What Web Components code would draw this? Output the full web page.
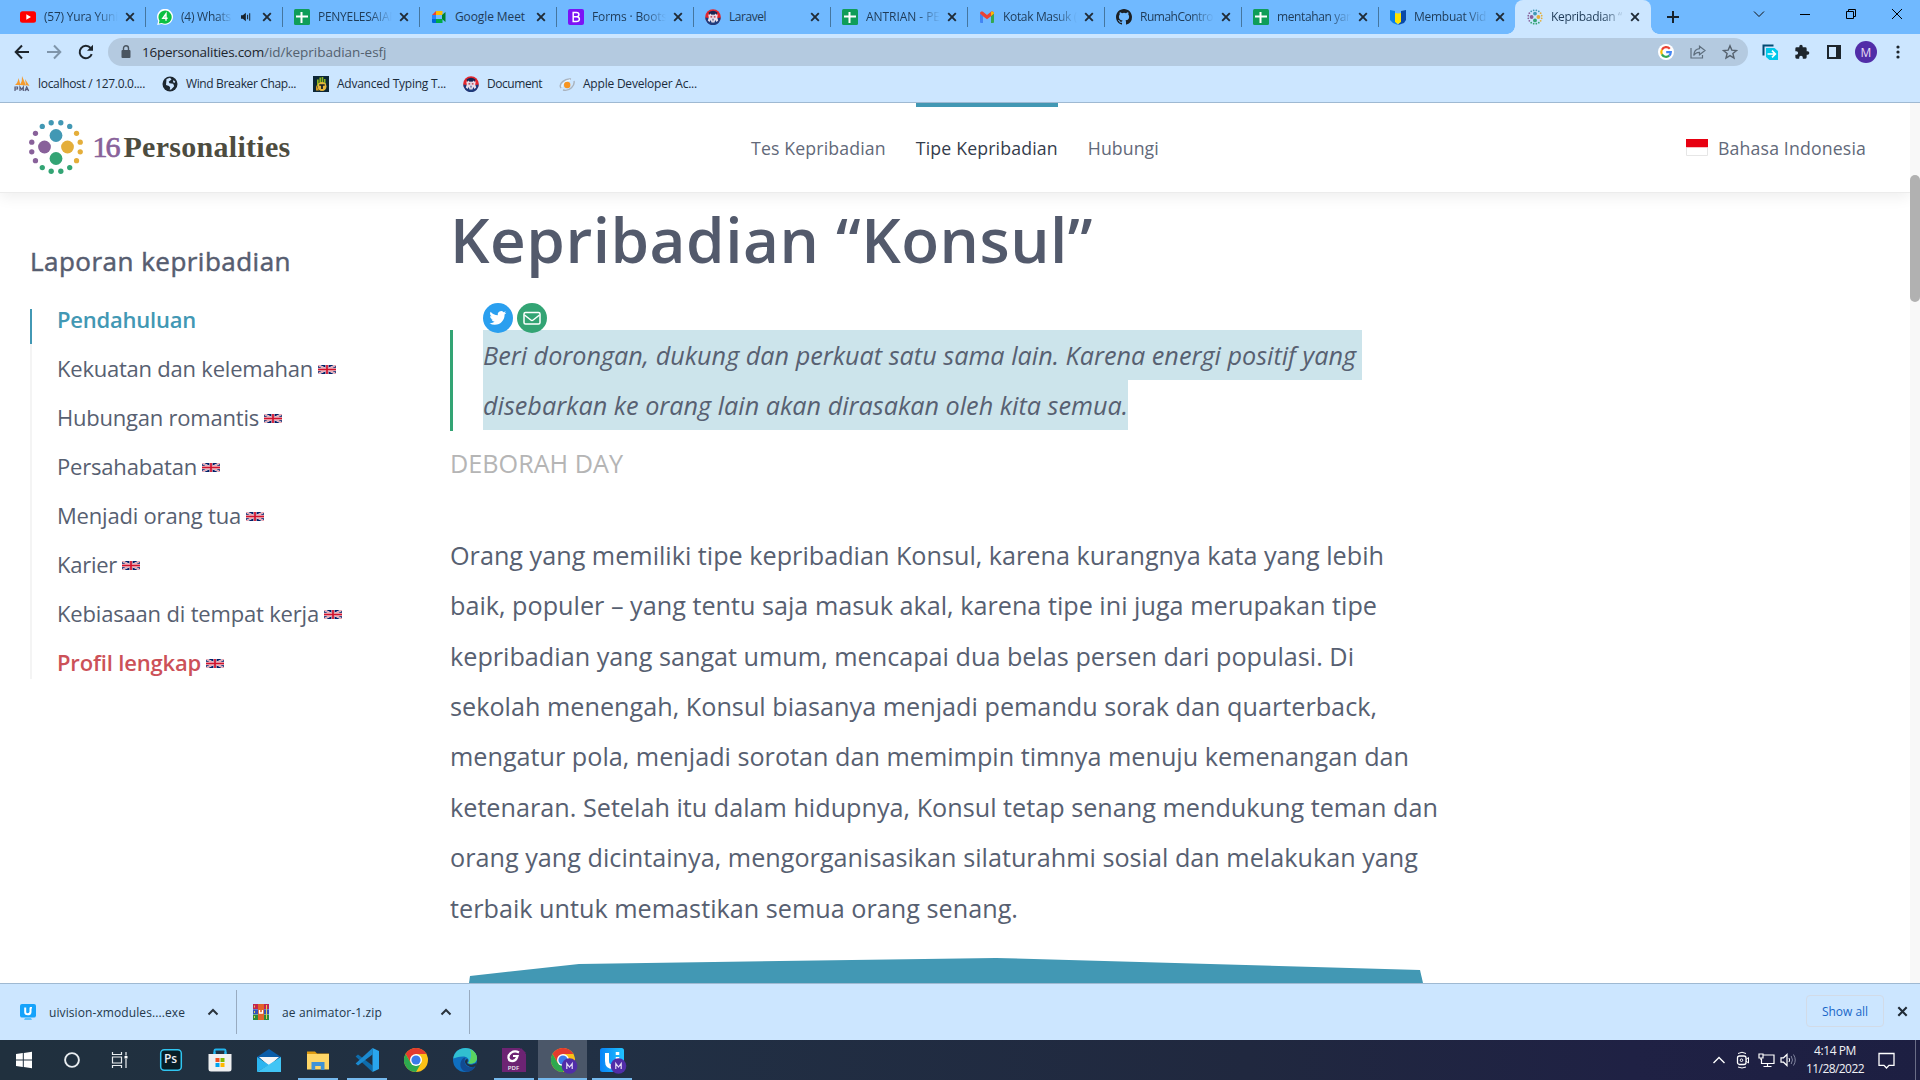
<!DOCTYPE html>
<html lang="id">
<head>
<meta charset="utf-8">
<title>Kepribadian “Konsul”</title>
<style>
html,body{margin:0;height:100%}
body{width:1920px;height:1080px;overflow:hidden;display:flex;flex-direction:column;font:12px "Open Sans","Noto Sans",sans-serif;background:#fff}
</style>
</head>
<body>
<tab-strip></tab-strip>
<tool-bar></tool-bar>
<bookmark-bar></bookmark-bar>
<site-page></site-page>
<download-bar></download-bar>
<task-bar></task-bar>
<script>
const sheet = '<rect width="16" height="16" rx="1.5" fill="#0f9d58"/><path d="M6.500 3h2v3.500H14v2H8.500V14h-2V8.500H2v-2h4.500z" fill="#fff"/>';
const face = '<circle cx="8" cy="8" r="7.800" fill="#e3262e"/><path d="M.3 8.500a7.700 7.700 0 0 0 15.400 0L12.500 9 8 12 3.500 9z" fill="#1d3b7c"/><path d="M3.500 3.500Q8 0 12.500 3.500L11.500 6H4.500z" fill="#182653"/><path d="M3.200 5.500q1.800.5 2.600-1L7 6.500l1-1.500 1 1.500 1.200-2q.8 1.500 2.600 1l-.6 3 1 3-1.700 1.500-1.300-2-.7 2.500h-3L5.800 11l-1.300 2-1.700-1.500 1-3z" fill="#e9dfea"/><path d="M5.500 7.200h1.700v1.200H5.500zm3.300 0h1.700v1.200H8.800z" fill="#b52a3a"/><path d="M7.300 9.800h1.400L8 13z" fill="#3a4a80"/>';
const chrome = '<circle cx="12" cy="12" r="12" fill="#fbc116"/><path d="M12 12L6.800 15 1.600 6A12 12 0 0 1 22.400 6H12z" fill="#e33b2e"/><path d="M1.600 6A12 12 0 0 0 12 24L17.200 15 12 17.500 6.800 15z" fill="#2da94f"/><circle cx="12" cy="12" r="6" fill="#fff"/><circle cx="12" cy="12" r="4.600" fill="#3a7bea"/>';
const badge = '<circle cx="18.500" cy="18" r="7.800" fill="#512da8"/><path d="M15.800 21v-5.500L18.500 19l2.700-3.500V21" fill="none" stroke="#e5dcf5" stroke-width="1.200"/>';
function dots(r, s) {
  const c = ['#4298b4','#e4ae3a','#33a474','#88619a'];
  let out = '';
  for (let i = 0; i < 16; i++) {
    const a = (i * 22.5 - 33.75) * Math.PI / 180;
    out += `<circle cx="${(27 + r * Math.sin(a)).toFixed(2)}" cy="${(27 - r * Math.cos(a)).toFixed(2)}" r="${s}" fill="${c[Math.floor(i / 4)]}"/>`;
  }
  return out + '<circle cx="27" cy="15.500" r="6.400" fill="#4298b4"/><circle cx="38.500" cy="27" r="6.400" fill="#e4ae3a"/><circle cx="27" cy="38.500" r="6.400" fill="#33a474"/><circle cx="15.500" cy="27" r="6.400" fill="#88619a"/>';
}
const ICONS = {
  youtube: ['0 0 16 16','<rect y="2.300" width="16" height="11.400" rx="2.500" fill="#f00"/><path d="M6.300 5.300v5.400L11 8z" fill="#fff"/>'],
  whats: ['0 0 16 16','<path d="M.2 16l1-4A8 8 0 1 1 4.500 15z" fill="#fff"/><path d="M1.800 14.400l.7-2.700a6.600 6.600 0 1 1 2.300 2.200z" fill="#0cc042"/><path d="M9 11.800V4.800L5.800 9.300h4.800" fill="none" stroke="#fff" stroke-width="1.400"/>'],
  sheet: ['0 0 16 16', sheet],
  meet: ['0 0 16 16','<path d="M1 6l4-4v4z" fill="#ea4335"/><path d="M5 2h6.500v4H5z" fill="#fbbc04"/><path d="M1 6h4v4H1z" fill="#2684fc"/><path d="M1 10h4v4H2a1 1 0 0 1-1-1z" fill="#0066da"/><path d="M5 10h6.500v4H5z" fill="#00ac47"/><path d="M11 6l3.500-3v10L11 10z" fill="#00832d"/><path d="M5 6h5v4H5z" fill="#70baff"/>'],
  boots: ['0 0 16 16','<rect width="16" height="16" rx="2" fill="#7c12f5"/><path d="M5.200 3.500h3.300c3.200 0 3.200 4.200.3 4.300 3.700.2 3.300 4.700-.3 4.700H5.200zM5.500 7.800h3.500" fill="none" stroke="#fff" stroke-width="1.500"/>'],
  face: ['0 0 16 16', face],
  gmail: ['0 0 16 16','<path d="M1 4.500l3 2.200V14H2a1 1 0 0 1-1-1z" fill="#4285f4"/><path d="M12 6.700l3-2.200V13a1 1 0 0 1-1 1h-2z" fill="#34a853"/><path d="M1 4.500C1 2.500 3 2 4.300 3L8 6l3.700-3C13 2 15 2.500 15 4.500l-3 2.800-4 3-4-3z" fill="#ea4335"/><path d="M12 3c1.500-1 3 0 3 1.500L12 7z" fill="#fbbc04"/>'],
  github: ['0 0 16 16','<path d="M8 0C3.580 0 0 3.580 0 8c0 3.540 2.290 6.530 5.470 7.590.4.070.55-.17.55-.38 0-.19-.01-.82-.01-1.490-2.010.37-2.530-.49-2.690-.94-.09-.23-.48-.94-.82-1.130-.28-.15-.68-.52-.01-.53.63-.01 1.080.58 1.230.82.72 1.210 1.870.87 2.330.66.07-.52.28-.87.51-1.070-1.780-.2-3.640-.89-3.640-3.950 0-.87.31-1.590.82-2.150-.08-.2-.36-1.020.08-2.120 0 0 .67-.21 2.200.82a7.600 7.600 0 0 1 4 0c1.530-1.040 2.200-.82 2.200-.82.44 1.100.16 1.920.08 2.120.51.56.82 1.270.82 2.150 0 3.070-1.870 3.750-3.650 3.950.29.25.54.73.54 1.480 0 1.070-.01 1.930-.01 2.200 0 .21.15.46.55.38A8 8 0 0 0 16 8c0-4.420-3.580-8-8-8z" fill="#1b1f23"/>'],
  umn: ['0 0 16 16','<path d="M0 1l5 1v10L8 16l-5-2-3-3z" fill="#0b80e8"/><path d="M11 2l5-1v10l-2 3-6 2 3-4z" fill="#0a49a8"/><path d="M5 4l3 .5L11 4v9l-3 2-3-2z" fill="#ffe400"/>'],
  person: ['0 0 54 54', dots(23, 3)],
  logo: ['0 0 54 54', dots(24.7, 2.65)],
  close: ['0 0 10 10','<path d="M1.200 1.200l7.600 7.600M8.800 1.200L1.200 8.800" stroke="#202b36" stroke-width="1.900"/>'],
  plus: ['0 0 12 12','<path d="M6 0v12M0 6h12" stroke="#17222c" stroke-width="2"/>'],
  sound: ['0 0 12 10','<path d="M0 3.200h2L5.300.4v9.200L2 6.800H0z" fill="#17222c"/><path d="M7.200 2.500v5M9.500 1v8" stroke="#17222c" stroke-width="1.100"/>'],
  wchev: ['0 0 12 12','<path d="M1 3.500l5 5 5-5" fill="none" stroke="#111" stroke-width="1"/>'],
  wmin: ['0 0 12 12','<path d="M1 6.500h10" stroke="#000"/>'],
  wmax: ['0 0 12 12','<path d="M1.500 3.500h7v7h-7zM3.500 3.500v-2h7v7h-2" fill="none" stroke="#000"/>'],
  wclose: ['0 0 12 12','<path d="M1 1l10 10M11 1L1 11" stroke="#000"/>'],
  back: ['0 0 16 16','<path d="M15 8H2M8 1.500L1.700 8 8 14.500" fill="none" stroke="#1d252c" stroke-width="2"/>'],
  fwd: ['0 0 16 16','<path d="M1 8h13M8 1.500L14.300 8 8 14.500" fill="none" stroke="#7f95aa" stroke-width="2"/>'],
  reload: ['0 0 16 16','<path d="M13.700 10.200A6.200 6.200 0 1 1 12.600 4" fill="none" stroke="#1d252c" stroke-width="2"/><path d="M15 .8v6H9z" fill="#1d252c"/>'],
  lock: ['0 0 10 14','<rect x=".5" y="5" width="9" height="8" rx="1" fill="#4a5560"/><path d="M2.500 5.500V3.300a2.500 2.500 0 0 1 5 0v2.200" fill="none" stroke="#4a5560" stroke-width="1.400"/>'],
  google: ['0 0 16 16','<circle cx="8" cy="8" r="8" fill="#fff"/><g fill="none" stroke-width="2.200"><path d="M11.800 4.700A4.800 4.800 0 0 0 3.900 5.700" stroke="#ea4335"/><path d="M3.900 5.700a4.800 4.800 0 0 0 0 4.700" stroke="#fbbc04"/><path d="M3.900 10.400a4.800 4.800 0 0 0 7.300 1.200" stroke="#34a853"/><path d="M11.200 11.600A4.800 4.800 0 0 0 12.800 8.200H8.200" stroke="#4285f4"/></g>'],
  share: ['0 0 16 14','<path d="M1 3v10h11.500V10" fill="none" stroke="#5f6f7e" stroke-width="1.200"/><path d="M9.500 1.200L15 5.500 9.500 9.800V7.300C6.500 7.200 4.800 8.500 3.700 10.500c.3-4 2.600-6.500 5.800-6.800z" fill="none" stroke="#5f6f7e" stroke-width="1.200"/>'],
  star: ['0 0 16 16','<path d="M8 1.800l1.800 4.300 4.700.4-3.600 3 1.100 4.600L8 11.600l-4 2.500 1.100-4.600-3.600-3 4.700-.4z" fill="none" stroke="#56626e" stroke-width="1.400"/>'],
  ext: ['0 0 16 16','<path d="M1.500 11.500V1.500h10" fill="none" stroke="#014a73" stroke-width="2"/><path d="M4 4h8.500L16 7v9H7.500L4 13z" fill="#00c8ea"/><path d="M5.500 10h7.500M10 6.700l3.300 3.300-3.300 3.300" fill="none" stroke="#fff" stroke-width="1.700"/>'],
  puzzle: ['0 0 24 24','<path d="M20.500 11H19V7a2 2 0 0 0-2-2h-4V3.500a2.500 2.500 0 0 0-5 0V5H4a2 2 0 0 0-2 2v3.800h1.500a2.700 2.700 0 0 1 0 5.400H2V20a2 2 0 0 0 2 2h3.800v-1.500a2.700 2.700 0 0 1 5.400 0V22H17a2 2 0 0 0 2-2v-4h1.500a2.500 2.500 0 0 0 0-5z" fill="#1d252c"/>'],
  panel: ['0 0 14 14','<path d="M1 1h12v12H1z" fill="none" stroke="#1d252c" stroke-width="2"/><path d="M9 1h4v12H9z" fill="#1d252c"/>'],
  more: ['0 0 4 14','<circle cx="2" cy="2" r="1.600" fill="#1d252c"/><circle cx="2" cy="7" r="1.600" fill="#1d252c"/><circle cx="2" cy="12" r="1.600" fill="#1d252c"/>'],
  pma: ['0 0 16 16','<path d="M1 9Q4 7 4.500 2l2 7zM6 9Q8.500 5 8 0l4 9.500zM11 3l4.500 7-3.500-1z" fill="#f59b2e"/><path d="M1 15v-4h2.500v2H1M6 15v-4l1.700 2.500L9.300 11v4M11 15l1.700-4 2 4M11.500 13.700h3" fill="none" stroke="#565a78" stroke-width="1.200"/>'],
  globe: ['0 0 16 16','<circle cx="8" cy="8" r="7.500" fill="#1d2730"/><path d="M4.500 3l3.500-1.200 1.500 1.700-2.800 2.300.8 1.400 3.700.6 1 2.500-3 3.200-1.500.2.500-2.200-1.200-1.500L4 9z" fill="#cce5ff"/><path d="M11.500 4l1.800 1.800-1 1.200-1.300-1z" fill="#cce5ff"/>'],
  typing: ['0 0 16 16','<rect width="16" height="16" fill="#0c2636"/><path d="M4 8.500V3.500h1.700V9zM6.400 7V1.500H8V7zM8.600 7V1h1.700v6zM11 8V3h1.500v6z" fill="#8db51d"/><path d="M4 7h8.500v3H4z" fill="#8db51d"/><circle cx="9" cy="10.500" r="4.500" fill="#e6b63b"/><path d="M6.300 8.300h5.400v1.500H9.900V13H8.100V9.800H6.300z" fill="#182127"/><path d="M3 9l3 5.500H3z" fill="#d59c24"/>'],
  apple: ['0 0 16 16','<path d="M2 12C-1 8 6 2 12 3M4 14c7 2 12-5 11-9" fill="none" stroke="#aab3be" stroke-width="1.400"/><path d="M3 11c0-4 4-6 8-7" fill="none" stroke="#fff"/><circle cx="8.200" cy="9" r="3.200" fill="#f79421"/>'],
  uk: ['0 0 18 9','<path d="M0 0h18v9H0z" fill="#012169"/><path d="M0 0l18 9M18 0L0 9" stroke="#fff" stroke-width="1.900"/><path d="M0 0l18 9M18 0L0 9" stroke="#d9536a" stroke-width=".7"/><path d="M9 0v9M0 4.500h18" stroke="#f1bcc5" stroke-width="3.300"/><path d="M9 0v9M0 4.500h18" stroke="#d0122d" stroke-width="1.700"/>'],
  id: ['0 0 22 17','<path d="M0 0h22v8.500H0z" fill="#e70011"/><path d="M.5 8.500v8h21v-8" fill="#fff" stroke="#e6e6e6"/>'],
  twitter: ['0 0 30 30','<circle cx="15" cy="15" r="15" fill="#2a9fef"/><path transform="translate(6.500 6.500) scale(.7)" d="M23.950 4.570a10 10 0 0 1-2.820.77 4.960 4.960 0 0 0 2.160-2.720c-.95.55-2 .95-3.130 1.180a4.920 4.920 0 0 0-8.380 4.480C7.690 8.090 4.070 6.130 1.640 3.160a4.920 4.920 0 0 0 1.520 6.570 4.900 4.900 0 0 1-2.230-.62v.06a4.920 4.920 0 0 0 3.950 4.830 5 5 0 0 1-2.210.08 4.940 4.940 0 0 0 4.600 3.420A9.870 9.870 0 0 1 0 19.540a14 14 0 0 0 7.550 2.210c9.050 0 14-7.500 14-13.980 0-.21 0-.42-.02-.63a9.940 9.940 0 0 0 2.420-2.570z" fill="#fff"/>'],
  mail: ['0 0 30 30','<circle cx="15" cy="15" r="15" fill="#33a474"/><rect x="7" y="9.500" width="16" height="11.500" rx="1.500" fill="none" stroke="#fff" stroke-width="1.500"/><path d="M7.500 12l6.300 5q1.200 1 2.400 0l6.300-5" fill="none" stroke="#fff" stroke-width="1.500"/>'],
  uivision: ['0 0 16 16','<rect width="16" height="13.500" rx="2" fill="#16a3fb"/><path d="M5 14h6l1 2H4z" fill="#5fc0fa"/><path d="M5.200 3.500V8q0 2.300 2.500 2.300T10.500 8V3.500" fill="none" stroke="#fff" stroke-width="2"/><path d="M11 3v1.500" stroke="#fff" stroke-width="2"/>'],
  rar: ['0 0 16 16','<path d="M0 0h16v5H0z" fill="#c32551"/><path d="M0 5.300h16v5H0z" fill="#3550b5"/><path d="M0 10.600h16V16H0z" fill="#2b8b37"/><path d="M5 0h6v16H5z" fill="#e2642a"/><path d="M6.500 6v3h3V6" fill="none" stroke="#fff" stroke-width="1.300"/><path d="M1.500 1.500v2m0 3.500v2m0 3v2M13.500 1v14" stroke="#e5cf55"/>'],
  up: ['0 0 12 8','<path d="M1.500 6.500L6 2l4.500 4.500" fill="none" stroke="#2a333c" stroke-width="2"/>'],
  win: ['0 0 24 24','<path d="M4 6l6.800-1v6.500H4zM11.800 4.900L20 3.800v7.700h-8.200zM4 12.500h6.800V19L4 18zM11.800 12.500H20v7.700l-8.200-1.100z" fill="#fff"/>'],
  cortana: ['0 0 24 24','<circle cx="12" cy="12" r="6.900" fill="none" stroke="#e9edf0" stroke-width="1.900"/>'],
  taskview: ['0 0 24 24','<path d="M4.500 4v2.500h9V4M4.500 20v-2.500h9V20M4.500 9h9v6h-9zM18 4v3.500M18 11v9" fill="none" stroke="#e9edf0" stroke-width="1.200"/><path d="M16.500 8h3v2.500h-3z" fill="#fff"/>'],
  ps: ['0 0 24 24','<rect x="1.700" y="1.700" width="20.600" height="20.600" rx="3.500" fill="#071e26" stroke="#31c5f0" stroke-width="1.500"/>'],
  store: ['0 0 24 24','<path d="M6.500 7V2.800q0-1.200 1.200-1.200h8.600q1.200 0 1.200 1.200V7" fill="none" stroke="#22b5ee" stroke-width="2"/><path d="M.5 6h23v15q0 2.500-2.500 2.500H3Q.5 23.500.5 21z" fill="#eff0f1"/><path d="M7.500 10h4v4h-4z" fill="#f25022"/><path d="M12.500 10h4v4h-4z" fill="#7fba00"/><path d="M7.500 15h4v4h-4z" fill="#00a4ef"/><path d="M12.500 15h4v4h-4z" fill="#ffb900"/><path d="M5.500 6h2V4h-2zm11 0h2V4h-2z" fill="#22b5ee"/>'],
  mailapp: ['0 0 24 24','<path d="M0 9L12 1l12 8v3H0z" fill="#0a5ca8"/><path d="M2 9h20l-10 9z" fill="#f5f5f7"/><path d="M0 9l12 8-12 7z" fill="#2bb5f0"/><path d="M24 9v15H0z" fill="#41c5f5"/>'],
  files: ['0 0 24 24','<path d="M1 3.500h8l2 2H23V21H1z" fill="#e09c11"/><path d="M1 6h22v15.500H1z" fill="#ffd667"/><path d="M5.500 22v-8h13v8h-3.700v-4H9.200v4z" fill="#3f92d6"/>'],
  vscode: ['0 0 24 24','<path d="M.6 8.500L3 6.500 17.500 17.500V24z" fill="#0e6cab"/><path d="M.6 15.500L3 17.500 17.500 6.500V0z" fill="#1b8ad0"/><path d="M17.500 24L24 21V3l-6.500-3z" fill="#29a6ee"/>'],
  chrome: ['0 0 24 24', chrome],
  edge: ['0 0 24 24','<circle cx="12" cy="12" r="12" fill="#0f6fc0"/><path d="M.3 10.500C2-3 22-3.500 24 9.500c.5 5-5 7.500-9 5.500 2-2 .5-6.500-5-6.500-4 0-8 1.500-9.700 2z" fill="#31bfd0"/><path d="M17 1.200c4 1.500 7 5 7 8.800 0 4.500-5.500 7-9 5 3-2.500 4-9 2-13.800z" fill="#5bd45f"/><path d="M14 23.800C5 23 6 10.500 12.500 9.500c-2 3-1 9 4.500 9.800 2 .3 4-.3 5.500-1-1.500 3-4.500 5.500-8.500 5.500z" fill="#124b91"/><path d="M14.500 11c1 2-.5 3-.5 4 2 2.500 7 2 9.500-.5L22.800 18c-4 3-11-.5-10.800-4.500.2-1.500 1-2.500 2.500-2.500z" fill="#213144"/>'],
  foxit: ['0 0 24 24','<path d="M0 0h18l6 6v18H0z" fill="#6d2473"/><path d="M19 0l5 5h-5z" fill="#6d2473"/><path d="M17 4.500C11 1.500 6 6 6.500 10c.5 4 6.500 4.500 8.500-.5l.5-1.500H11" fill="none" stroke="#fff" stroke-width="2.200"/>'],
  chromem: ['0 0 28 28', chrome + badge],
  uim: ['0 0 28 28','<defs><linearGradient id="g"><stop stop-color="#0883f6"/><stop offset="1" stop-color="#20c3ff"/></linearGradient></defs><rect width="24" height="24" rx="2.500" fill="url(#g)"/><path d="M7 5v8q0 6 6 6" fill="none" stroke="#fff" stroke-width="4"/><path d="M17.500 9v8M17.500 4v3" stroke="#fff" stroke-width="3.500"/>' + badge],
  tchev: ['0 0 14 14','<path d="M1.500 10L7 4.500 12.500 10" fill="none" stroke="#fff" stroke-width="1.400"/>'],
  cam: ['0 0 16 18','<rect x="2.500" y="5" width="8.500" height="8.500" rx="2" fill="none" stroke="#fff" stroke-width="1.300"/><circle cx="6.500" cy="9.200" r="1.300" fill="none" stroke="#fff"/><path d="M11 8.500l2.500-2v5.500L11 10M3 2.500q4-2.500 8 0M3 16q4 2 8 0" fill="none" stroke="#fff"/>'],
  net: ['0 0 17 16','<path d="M5 3h11v8.500H3.500V7M9.500 12v2.500M5.500 14.500h8M1 2h4v4H1zM3 6v2" fill="none" stroke="#fff" stroke-width="1.200"/>'],
  vol: ['0 0 18 14','<path d="M1 4.800h2.500L7 1.500v11L3.500 9.200H1z" fill="none" stroke="#fff" stroke-width="1.200"/><path d="M9 5q1.200 2 0 4" fill="none" stroke="#fff"/><path d="M11.200 3q2.500 4 0 8M13.500 1.500q3.500 5.500 0 11" fill="none" stroke="#8286a0"/>'],
  note: ['0 0 17 17','<path d="M1 1.500h15v11.800h-5L8.500 16 6 13.300H1z" fill="none" stroke="#fff" stroke-width="1.300"/>']
};
function define(name, html, setup) {
  customElements.define(name, class extends HTMLElement {
    constructor() {
      super();
      this.attachShadow({mode: 'open'}).innerHTML = html;
    }
    connectedCallback() { if (setup) setup(this); }
  });
}
const ic = (n, w = 16, h = w) => `<ui-icon name="${n}" style="width:${w}px;height:${h}px"></ui-icon>`;
const ft = (t, w) => `<fit-text w="${w}">${t}</fit-text>`;
/* fixed-width cell with its content in the middle */
const cell = (w, c, cls = '') => `<div class="cell ${cls}" style="width:${w}px">${c}</div>`;
const CELL = '.cell{display:flex;align-items:center;justify-content:center;flex:none}';

define('ui-icon', '', el => {
  const [vb, d] = ICONS[el.getAttribute('name')];
  el.shadowRoot.innerHTML = `<style>:host{display:block;flex:none}svg{display:block;width:100%;height:100%}</style><svg viewBox="${vb}">${d}</svg>`;
});

define('browser-tab', `<style>
:host{display:flex;align-items:center;width:137px;height:34px;box-sizing:border-box;position:relative;padding-left:12px;flex:none}
:host([active]){background:#cce6ff;border-radius:8px 8px 0 0;width:136px}
:host([active])::before,:host([active])::after{content:"";position:absolute;bottom:0;width:8px;height:8px}
:host([active])::before{left:-8px;background:radial-gradient(circle at 0 0,transparent 7.500px,#cce6ff 8px)}
:host([active])::after{right:-8px;background:radial-gradient(circle at 100% 0,transparent 7.500px,#cce6ff 8px)}
.t{margin-left:8px;flex:none;width:74px;overflow:hidden;white-space:nowrap;color:#1f3b57;line-height:18px;-webkit-mask-image:linear-gradient(90deg,#000 70%,transparent);mask-image:linear-gradient(90deg,#000 70%,transparent)}
:host([full]) .t{-webkit-mask-image:none;mask-image:none;width:76px}
:host([audio]) .t{width:51px}
.a{width:23px;padding-left:9px;box-sizing:border-box;display:none}
:host([audio]) .a{display:block}
.x{margin-left:auto;margin-right:10px}
.sep{width:1px;height:20px;background:#45769f}
:host(:not([active])) .sep{margin-right:-1px}
:host([active]) .sep,:host([last]) .sep{background:none}
</style><slot name="icon"></slot><div class="t"><slot></slot></div><div class="a">${ic('sound', 11, 10)}</div><div class="x">${ic('close', 10)}</div><div class="sep"></div>`);

const tabs = [
  ['youtube','(57) Yura Yuni',74],['whats','(4) Whats',50,'audio'],['sheet','PENYELESAIAN',80],['meet','Google Meet',70,'full'],
  ['boots','Forms · Boots',75],['face','Laravel',37,'full'],['sheet','ANTRIAN - PE',74],['gmail','Kotak Masuk (',74],
  ['github','RumahContro',73],['sheet','mentahan yan',76],['umn','Membuat Vid',72,'last'],['person','Kepribadian “',71,'active']];
define('tab-strip', `<style>${CELL}
:host{display:flex;height:34px;flex:none;background:#70b9ff;padding-left:8px;align-items:center;box-sizing:border-box}
.win{margin-left:auto;display:flex;height:28px;align-self:flex-start}
</style>` + tabs.map(([i, t, w, a = '']) => `<browser-tab ${a}><ui-icon slot="icon" name="${i}" style="width:16px;height:16px"></ui-icon>${ft(t, w)}</browser-tab>`).join('') +
`<div style="margin-left:16px">${ic('plus', 12)}</div><div class="win">${['wchev','wmin','wmax','wclose'].map(n => cell(46, ic(n, 12))).join('')}</div>`);

define('tool-bar', `<style>${CELL}
:host{display:flex;align-items:center;height:35px;flex:none;background:#cce6ff;box-sizing:border-box;padding:1px 6px 0 6px}
.omni{width:1640px;flex:none;height:28px;margin:0 0 0 6px;border-radius:14px;background:#b4cae0;display:flex;align-items:center;box-sizing:border-box;padding-left:13px;font-size:13.500px;color:#1d252c}
.u{margin-left:11px;flex:1;display:flex;line-height:20px;white-space:nowrap}.u i{font-style:normal;color:#53616f}
.me{width:22px;height:22px;border-radius:50%;background:#512da8;color:#e6dcf5;display:flex;align-items:center;justify-content:center;font-size:12px}
</style>${cell(32, ic('back', 16))}${cell(32, ic('fwd', 16))}${cell(32, ic('reload', 16))}
<div class="omni">${ic('lock', 10, 14)}<div class="u">${ft('16personalities.com', 122)}<i>${ft('/id/kepribadian-esfj', 122.5)}</i></div>${cell(32, ic('google', 16))}${cell(32, ic('share', 16, 14))}${cell(32, ic('star', 16))}<div style="width:2px"></div></div>
<div style="width:7px"></div>${cell(32, ic('ext', 16))}${cell(32, ic('puzzle', 16))}${cell(32, ic('panel', 14))}${cell(32, '<div class="me">M</div>')}${cell(32, ic('more', 4, 14))}`);

define('bookmark-bar', `<style>
:host{display:flex;height:34px;flex:none;background:#cce6ff;border-bottom:1px solid #9fb9d2;box-sizing:border-box;padding:0 0 4px 14px;color:#1b2c3c;line-height:18px;align-items:center}
div{display:flex;align-items:center;gap:8px;margin-right:17px}
</style>` + [['pma','localhost / 127.0.0....',107],['globe','Wind Breaker Chap...',110],['typing','Advanced Typing T...',109],['face','Document',55],['apple','Apple Developer Ac...',114]]
  .map(([i, t, w]) => `<div>${ic(i)}${ft(t, w)}</div>`).join(''));

define('site-header', `<style>
:host{display:flex;height:89px;flex:none;border-bottom:1px solid #ececec;margin-bottom:-1px;box-sizing:content-box;box-shadow:0 4px 14px rgba(0,0,0,.07);background:#fff;position:relative;z-index:2;color:#626979;font-size:17.700px}
.brand{display:flex;align-items:center;width:751px;box-sizing:border-box;padding:0 0 2px 29px;font:700 30px "Liberation Serif",serif;color:#4d4c3f}
.brand .n{color:#88619a;font-weight:400;-webkit-text-stroke:.7px #88619a;margin:0 5px 0 9.500px}
nav{display:flex;gap:30px}
nav div{box-sizing:border-box;border-top:4px solid transparent;padding-top:28px;line-height:26px}
nav .on{border-color:#4298b4;color:#343c4b}
.lang{margin-left:auto;margin-right:44px;display:flex;gap:10px;align-items:center}
</style><div class="brand">${ic('logo', 54)}<span class="n">${ft('16', 26)}</span>${ft('Personalities', 167)}</div>
<nav><div>${ft('Tes Kepribadian', 134.8)}</div><div class="on">${ft('Tipe Kepribadian', 142)}</div><div>${ft('Hubungi', 71)}</div></nav>
<div class="lang">${ic('id', 22, 17)}${ft('Bahasa Indonesia', 148)}</div>`);

define('report-nav', `<style>
:host{display:block;width:420px;flex:none;padding:51px 0 0 30px;color:#576071}
h2{margin:0;font:400 26px/36px "Open Sans",sans-serif;color:#565d70;-webkit-text-stroke:.5px #565d70}
.l{display:flex;margin-top:30px}
.rail{width:2px;height:370px;background:#f4f4f4}.rail i{display:block;height:35px;background:#4298b4}
.items{margin:-5px 0 0 25px;display:flex;flex-direction:column;gap:19px;font-size:22px;line-height:30px}
.items div{display:flex;align-items:center;gap:5px}
.items ui-icon{margin-top:2px}
.a{color:#4298b4;font-weight:600}.p{color:#cc5158;font-weight:600}
</style><h2>${ft('Laporan kepribadian', 261)}</h2><div class="l"><div class="rail"><i></i></div><div class="items">` +
[['Pendahuluan',139,'a'],['Kekuatan dan kelemahan',256],['Hubungan romantis',202],['Persahabatan',140],['Menjadi orang tua',184],['Karier',60],['Kebiasaan di tempat kerja',262],['Profil lengkap',144,'p']]
  .map(([t, w, c = '']) => `<div class="${c}">${ft(t, w)}${c === 'a' ? '' : ic('uk', 18, 9)}</div>`).join('') + '</div></div>');

define('personality-article', `<style>
:host{display:block;width:1000px;font-size:25.200px;line-height:50.400px;color:#576071}
h1{margin:5px 0 0;font:600 62px/84px "Open Sans",sans-serif;color:#535a6c}
.share{display:flex;gap:4px;margin:22px 0 -3px 33px;position:relative;z-index:1}
blockquote{margin:0;border-left:3px solid #33a474;padding-left:30px;font-style:italic;height:101px}
blockquote div{background:#cce4eb;white-space:nowrap;height:50px;line-height:50px}
cite{display:block;font-style:normal;color:#b5b5b5;margin-top:7px}
.p{margin:41.400px 0 0}.p div{height:50.400px;white-space:nowrap}
svg{display:block;margin:25.400px 0 0 19px}
</style><h1>${ft('Kepribadian “Konsul”', 643)}</h1><div class="share">${ic('twitter', 30)}${ic('mail', 30)}</div>
<blockquote><div style="width:879px">${ft('Beri dorongan, dukung dan perkuat satu sama lain. Karena energi positif yang', 873)}</div><div style="width:645px">${ft('disebarkan ke orang lain akan dirasakan oleh kita semua.', 645)}</div></blockquote>
<cite>${ft('DEBORAH DAY', 173)}</cite><div class="p">` +
[['Orang yang memiliki tipe kepribadian Konsul, karena kurangnya kata yang lebih',934],['baik, populer – yang tentu saja masuk akal, karena tipe ini juga merupakan tipe',927],['kepribadian yang sangat umum, mencapai dua belas persen dari populasi. Di',904],['sekolah menengah, Konsul biasanya menjadi pemandu sorak dan quarterback,',927],['mengatur pola, menjadi sorotan dan memimpin timnya menuju kemenangan dan',959],['ketenaran. Setelah itu dalam hidupnya, Konsul tetap senang mendukung teman dan',988],['orang yang dicintainya, mengorganisasikan silaturahmi sosial dan melakukan yang',968],['terbaik untuk memastikan semua orang senang.',568]]
  .map(([t, w]) => `<div>${ft(t, w)}</div>`).join('') +
`</div><svg width="960" height="60"><path d="M0 60V25L1 18 110 6 527 0 951 12 954 25 960 60z" fill="#4298b4"/></svg>`);

define('site-page', `<style>
:host{display:flex;height:880px;flex:none;overflow:hidden;background:#fff}
.page{width:1910px;display:flex;flex-direction:column;overflow:hidden}
.body{display:flex;min-height:0;flex:1}
.sb{width:10px;background:#f8f8f8;padding-top:72px;box-sizing:border-box}
.sb i{display:block;height:127px;border-radius:5px;background:#b1b1b1}
</style><div class="page"><site-header></site-header><div class="body"><report-nav></report-nav><personality-article></personality-article></div></div><div class="sb"><i></i></div>`);

define('download-item', `<style>
:host{display:flex;align-items:center;box-sizing:border-box;height:44px;border-right:1px solid #98abc0;color:#23384b}
.n{margin:1px 0 0 13px;line-height:18px}.u{margin-left:auto;margin-right:17px}
</style><slot name="icon"></slot><div class="n"><slot></slot></div><div class="u">${ic('up', 12, 8)}</div>`);

define('download-bar', `<style>
:host{display:flex;height:57px;flex:none;background:#cce6ff;border-top:1px solid #9fb9d2;box-sizing:border-box;align-items:center;padding:0 12px 0 20px}
.all{margin-left:auto;width:78px;height:32px;border:1px solid #d2dbe7;border-radius:4px;box-sizing:border-box;display:flex;align-items:center;justify-content:center;color:#1a66c8;margin-bottom:2px}
.x{margin:0 0 2px 13px}
</style><download-item style="width:217px"><ui-icon slot="icon" name="uivision" style="width:16px;height:16px"></ui-icon>${ft('uivision-xmodules....exe', 136)}</download-item>
<download-item style="width:233px;padding-left:16px"><ui-icon slot="icon" name="rar" style="width:16px;height:16px"></ui-icon>${ft('ae animator-1.zip', 100)}</download-item>
<div class="all">${ft('Show all', 46)}</div><div class="x">${ic('close', 11)}</div>`);

const apps = [['win'],['cortana'],['taskview'],['ps','first'],['store'],['mailapp'],['files','run'],['vscode','run'],['chrome'],['edge'],['foxit','run'],['chromem','run on'],['uim','run']];
define('task-bar', `<style>${CELL}
:host{display:flex;height:40px;flex:none;background:linear-gradient(90deg,#20303e 0,#213044 30%,#20283f 65%,#1f2144 85%,#1d1f42);color:#f0f1f5}
.app{height:40px;position:relative}
.first{margin-left:2px}
.run::after{content:"";position:absolute;left:5px;right:4px;bottom:0;height:2px;background:#76b9ed}
.on{background:#4b5769}.on::after{left:0;right:0}
.lbl{position:absolute;font-weight:600;line-height:1}
.tray{margin-left:auto;display:flex;align-items:center}
.clock{display:flex;flex-direction:column;align-items:center;line-height:18px;width:66px;margin:0 10px 0 1px}
.end{width:1px;height:40px;background:#6a6d86;margin:0 4px 0 20px}
</style>` + apps.map(([n, c = '']) => {
  const big = n === 'chromem' || n === 'uim';
  const lbl = n === 'ps' ? '<span class="lbl" style="font-size:12px;top:13px">Ps</span>' : n === 'foxit' ? '<span class="lbl" style="font-size:6px;top:25px">PDF</span>' : '';
  return cell(n === 'win' || n === 'cortana' || n === 'taskview' ? 48 : 49, `<div style="${big ? 'margin:4px 0 0 4px' : ''}">${ic(n, big ? 28 : 24)}</div>${lbl}`, 'app ' + c);
}).join('') +
`<div class="tray">${cell(25, ic('tchev', 14))}${cell(24, ic('cam', 16, 18))}${cell(22, ic('net', 17, 16))}${cell(24, ic('vol', 18, 14))}<div class="clock">${ft('4:14 PM', 42)}${ft('11/28/2022', 58)}</div>${ic('note', 17)}<div class="end"></div></div>`);

/* single-line text that tracks its letters to fill a given width */
define('fit-text', `<style>:host{display:inline-block;white-space:nowrap;vertical-align:top}span{display:inline-block}</style><span><slot></slot></span>`, el => {
  const s = el.shadowRoot.querySelector('span');
  const n = [...el.textContent].length;
  const d = (+el.getAttribute('w') - s.getBoundingClientRect().width) / n;
  s.style.letterSpacing = d.toFixed(4) + 'px';
});
</script>
</body>
</html>
